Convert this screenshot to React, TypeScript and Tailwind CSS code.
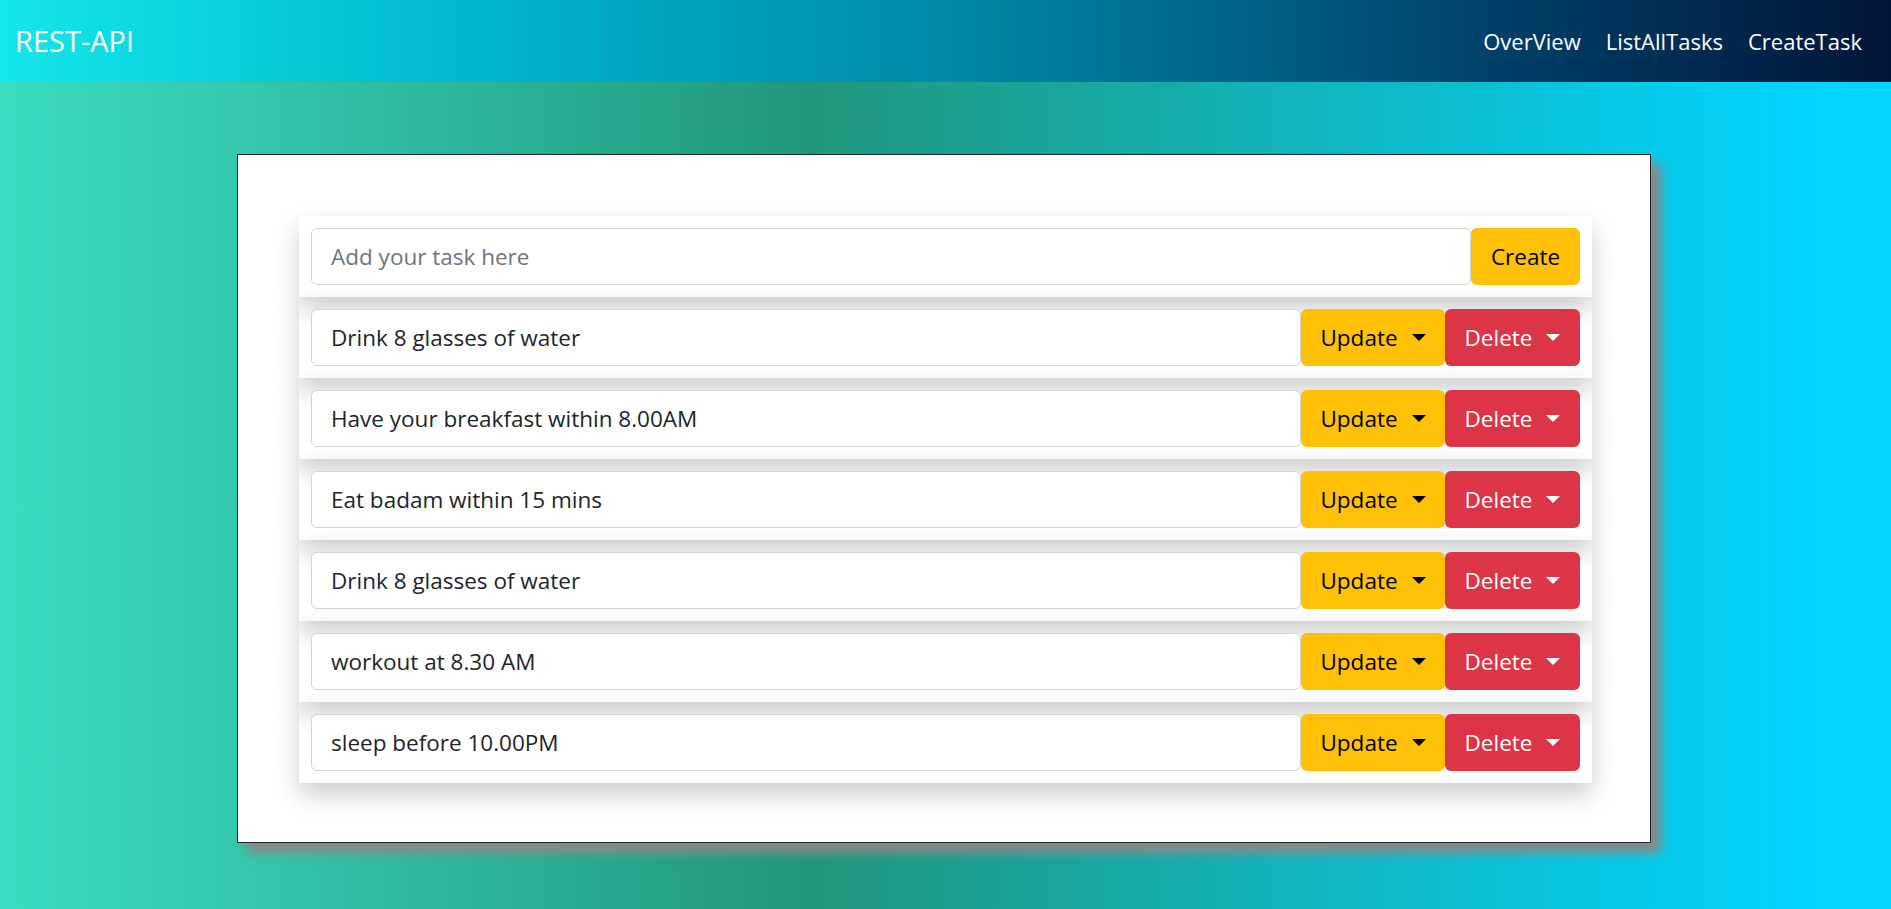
const tasks = [
  'Drink 8 glasses of water',
  'Have your breakfast within 8.00AM',
  'Eat badam within 15 mins',
  'Drink 8 glasses of water',
  'workout at 8.30 AM',
  'sleep before 10.00PM',
]

function Caret() {
  return <span className="ml-[14px] inline-block h-0 w-0 border-x-[7px] border-t-[7px] border-b-0 border-x-transparent border-t-current" />
}

function TaskRow({ text }: { text: string }) {
  return (
    <div className="flex h-[81px] items-center px-[12px] shadow-[0_12px_24px_rgba(0,0,0,0.2)]">
      <input
        defaultValue={text}
        readOnly
        className="h-[57px] min-w-0 flex-1 rounded-[6px] border border-[#ced4da] bg-white px-[19px] text-[22.5px] text-[#212529] outline-none"
      />
      <button className="flex h-[57px] w-[144px] items-center justify-center rounded-[6px] bg-[#ffc107] text-[22.5px] text-black">
        Update
        <Caret />
      </button>
      <button className="flex h-[57px] w-[135px] items-center justify-center rounded-[6px] bg-[#dc3545] text-[22.5px] text-white">
        Delete
        <Caret />
      </button>
    </div>
  )
}

export default function App() {
  return (
    <div className="min-h-screen bg-[linear-gradient(90deg,#3bdcc1_0%,#21977d_43%,#00d4ff_96%)] font-['Open_Sans',sans-serif]">
      <nav className="flex h-[82px] items-center justify-between bg-[linear-gradient(90deg,#13e7ea_0%,#00b6ce_25%,#008aaa_50%,#006488_65%,#003e66_80%,#021538_100%)] pl-[15px] pr-[29px] text-white">
        <span className="text-[29px] leading-[40px]">REST-API</span>
        <div className="flex gap-[25px] text-[22px] leading-[34px]">
          <a>OverView</a>
          <a>ListAllTasks</a>
          <a>CreateTask</a>
        </div>
      </nav>

      <div className="flex pt-[72px] pb-[66px] pl-[237px]">
        <div className="w-[1414px] border border-[#212529] bg-white pt-[61px] pr-[58px] pb-[59px] pl-[61px] shadow-[10px_10px_10px_#888]">
          <div className="flex h-[81px] items-center px-[12px] shadow-[0_12px_24px_rgba(0,0,0,0.2)]">
            <input
              placeholder="Add your task here"
              className="h-[57px] min-w-0 flex-1 rounded-[6px] border border-[#ced4da] bg-white px-[19px] text-[22.5px] text-[#212529] outline-none placeholder:text-[#6c757d]"
            />
            <button className="h-[57px] w-[109px] rounded-[6px] bg-[#ffc107] text-[22.5px] text-black">Create</button>
          </div>
          {tasks.map((t, i) => (
            <TaskRow key={i} text={t} />
          ))}
        </div>
      </div>
    </div>
  )
}
